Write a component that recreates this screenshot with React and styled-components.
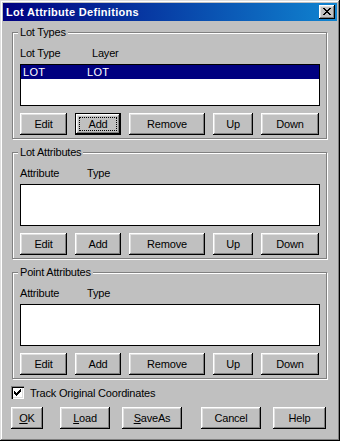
import React from "react";
import styled, { createGlobalStyle } from "styled-components";

const GlobalStyle = createGlobalStyle`
  html, body {
    margin: 0;
    padding: 0;
    background: #c0c0c0;
  }
  body {
    font-family: "Liberation Sans", Arial, sans-serif;
    font-size: 11px;
    color: #000;
  }
`;

const raised = `
  box-shadow: inset -1px -1px #000, inset 1px 1px #fff,
    inset -2px -2px #808080, inset 2px 2px #dfdfdf;
`;

const Window = styled.div`
  box-sizing: border-box;
  width: 340px;
  height: 441px;
  padding: 3px;
  background: #c0c0c0;
  box-shadow: inset -1px -1px #000, inset 1px 1px #dfdfdf,
    inset -2px -2px #808080, inset 2px 2px #fff;
  display: flex;
  flex-direction: column;
`;

const TitleBar = styled.div`
  height: 18px;
  display: flex;
  align-items: center;
  justify-content: space-between;
  padding: 0 2px 0 3px;
  background: linear-gradient(to right, #000080, #1084d0);
`;

const Title = styled.span`
  color: #fff;
  font-weight: bold;
  font-size: 11px;
  letter-spacing: 0.3px;
`;

const CloseButton = styled.div`
  width: 16px;
  height: 14px;
  background: #c0c0c0;
  ${raised}
  display: flex;
  align-items: center;
  justify-content: center;
  padding-bottom: 1px;
  box-sizing: border-box;
`;

const Body = styled.div`
  padding: 11px 8px 0;
  display: flex;
  flex-direction: column;
`;

const Groups = styled.div`
  display: flex;
  flex-direction: column;
  gap: 13px;
  margin-left: 1px;
`;

const Group = styled.div`
  position: relative;
  box-sizing: border-box;
  width: 315px;
  height: 107px;
  border: 1px solid #808080;
  box-shadow: inset 1px 1px #fff, 1px 1px #fff;
  padding: 14px 6px 0 7px;
`;

const GroupLabel = styled.span`
  position: absolute;
  top: -7px;
  left: 5px;
  padding: 0 2px;
  line-height: 13px;
  background: #c0c0c0;
  letter-spacing: -0.2px;
`;

const HeaderRow = styled.div`
  display: flex;
  height: 13px;
  line-height: 13px;
  margin-bottom: 4px;
  letter-spacing: -0.2px;
`;

const Col = styled.span`
  width: ${(p) => p.$w}px;
  flex: none;
`;

const ListBox = styled.div`
  box-sizing: border-box;
  width: 300px;
  height: 42px;
  background: #fff;
  border: 1px solid #000;
`;

const Row = styled.div`
  display: flex;
  height: 14px;
  line-height: 14px;
  padding-left: 2px;
  background: ${(p) => (p.$selected ? "#000080" : "transparent")};
  color: ${(p) => (p.$selected ? "#fff" : "#000")};
  letter-spacing: 0.3px;
`;

const ButtonRow = styled.div`
  display: flex;
  gap: 8px;
  margin-top: ${(p) => p.$top || 0}px;
`;

const Button = styled.button`
  position: relative;
  box-sizing: border-box;
  width: ${(p) => p.$w}px;
  height: 22px;
  margin-left: ${(p) => p.$ml || 0}px;
  padding: 0;
  background: #c0c0c0;
  border: ${(p) => (p.$def ? "1px solid #000" : "none")};
  ${raised}
  font-family: "Liberation Sans", Arial, sans-serif;
  font-size: 11px;
  letter-spacing: -0.2px;
  color: #000;
  flex: none;

  &::after {
    content: "";
    display: ${(p) => (p.$def ? "block" : "none")};
    position: absolute;
    inset: 3px;
    border: 1px dotted #000;
  }
`;

const CheckRow = styled.label`
  display: flex;
  align-items: center;
  gap: 6px;
  height: 13px;
  margin-top: 7px;
  letter-spacing: -0.2px;
`;

const CheckBox = styled.span`
  box-sizing: border-box;
  width: 13px;
  height: 13px;
  background: #fff;
  box-shadow: inset 1px 1px #808080, inset 2px 2px #000,
    inset -1px -1px #fff, inset -2px -2px #dfdfdf;
  display: flex;
  align-items: center;
  justify-content: center;
`;

function CloseIcon() {
  return (
    <svg width="8" height="7" viewBox="0 0 8 7" shapeRendering="crispEdges">
      <path
        d="M0 0h2v1h1v1h2V1h1V0h2v1H7v1H6v1H5v1h1v1h1v1h1v1H6V6H5V5H3v1H2v1H0V6h1V5h1V4h1V3H2V2H1V1H0z"
        fill="#000"
      />
    </svg>
  );
}

function CheckMark() {
  return (
    <svg width="7" height="7" viewBox="0 0 7 7" shapeRendering="crispEdges">
      <path
        d="M6 0h1v3H6v1H5v1H4v1H3v1H2V6H1V5H0V2h1v1h1v1h1V3h1V2h1V1h1z"
        fill="#000"
      />
    </svg>
  );
}

function AttributeGroup({ label, first, second, col, rows, defaultButton }) {
  return (
    <Group>
      <GroupLabel>{label}</GroupLabel>
      <HeaderRow>
        <Col $w={col}>{first}</Col>
        <span>{second}</span>
      </HeaderRow>
      <ListBox>
        {rows.map((r) => (
          <Row key={r[0]} $selected>
            <Col $w={64}>{r[0]}</Col>
            <span>{r[1]}</span>
          </Row>
        ))}
      </ListBox>
      <ButtonRow $top={7}>
        <Button $w={47}>Edit</Button>
        <Button $w={46} $def={defaultButton}>
          Add
        </Button>
        <Button $w={76}>Remove</Button>
        <Button $w={40}>Up</Button>
        <Button $w={58}>Down</Button>
      </ButtonRow>
    </Group>
  );
}

export default function App() {
  return (
    <>
      <GlobalStyle />
      <Window>
        <TitleBar>
          <Title>Lot Attribute Definitions</Title>
          <CloseButton>
            <CloseIcon />
          </CloseButton>
        </TitleBar>
        <Body>
          <Groups>
            <AttributeGroup
              label="Lot Types"
              first="Lot Type"
              second="Layer"
              col={72}
              rows={[["LOT", "LOT"]]}
              defaultButton
            />
            <AttributeGroup
              label="Lot Attributes"
              first="Attribute"
              second="Type"
              col={67}
              rows={[]}
            />
            <AttributeGroup
              label="Point Attributes"
              first="Attribute"
              second="Type"
              col={67}
              rows={[]}
            />
          </Groups>
          <CheckRow>
            <CheckBox>
              <CheckMark />
            </CheckBox>
            Track Original Coordinates
          </CheckRow>
          <ButtonRow $top={8}>
            <Button $w={32}>
              <u>O</u>K
            </Button>
            <Button $w={50} $ml={9}>
              <u>L</u>oad
            </Button>
            <Button $w={60} $ml={4}>
              <u>S</u>aveAs
            </Button>
            <Button $w={60} $ml={11}>
              Cancel
            </Button>
            <Button $w={53} $ml={4}>
              Help
            </Button>
          </ButtonRow>
        </Body>
      </Window>
    </>
  );
}
